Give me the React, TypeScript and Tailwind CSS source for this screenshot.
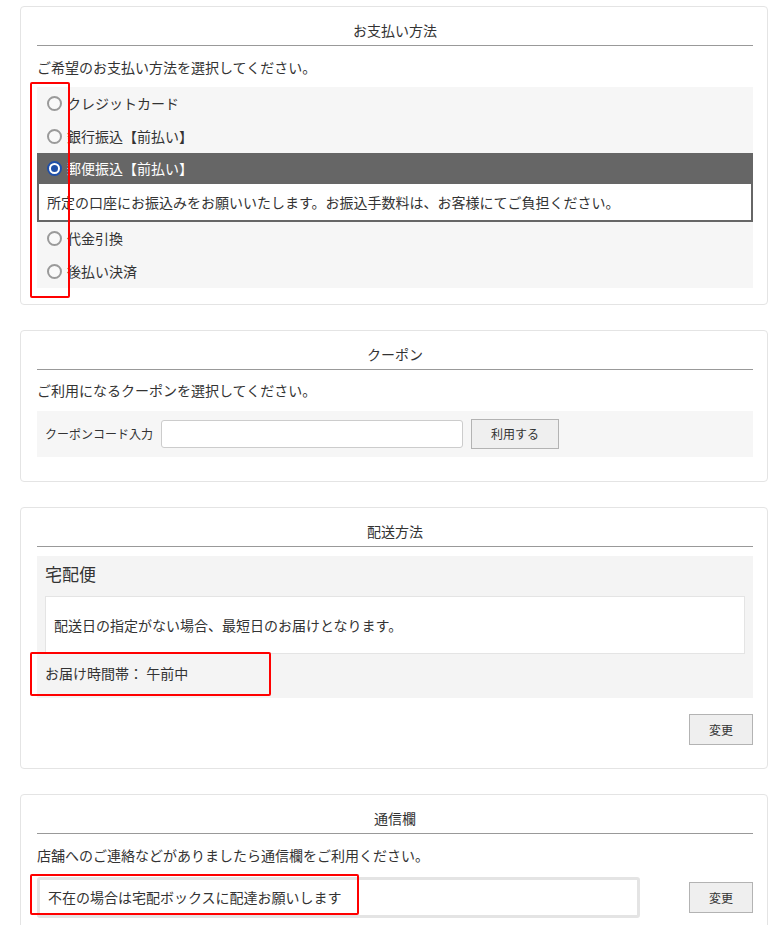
import React from "react";

const font = { fontFamily: '"Noto Sans CJK JP", "Noto Sans", sans-serif' };

function Radio({ checked }: { checked?: boolean }) {
  if (checked) {
    return (
      <span className="flex h-[15px] w-[15px] shrink-0 items-center justify-center rounded-full border-[2px] border-[#1f4fa8] bg-white">
        <span className="h-[7px] w-[7px] rounded-full bg-[#1f4fa8]" />
      </span>
    );
  }
  return <span className="h-[15px] w-[15px] shrink-0 rounded-full border-[2px] border-[#9a9a9a] bg-white/40" />;
}

function Heading({ children }: { children: React.ReactNode }) {
  return (
    <div className="border-b border-[#999] pb-[3px] text-center text-[14px] leading-[24px] text-[#333]">{children}</div>
  );
}

function Btn({ children, className = "" }: { children: React.ReactNode; className?: string }) {
  return (
    <button
      className={`flex items-center justify-center border border-[#b3b3b3] bg-[#efefef] text-[12px] text-[#333] ${className}`}
    >
      {children}
    </button>
  );
}

function RedBox({ className }: { className: string }) {
  return <div className={`pointer-events-none absolute rounded-[2px] border-[2px] border-[#ff0000] ${className}`} />;
}

export default function App() {
  return (
    <div style={font} className="min-h-[925px] bg-white pt-[6px] text-[#333]">
      <div className="ml-[20px] flex w-[748px] flex-col gap-[25px]">
        {/* Payment */}
        <div className="relative rounded-[4px] border border-[#e4e4e4] pb-[16px] pl-[16px] pr-[14px] pt-[11px]">
          <Heading>お支払い方法</Heading>
          <div className="mt-[11px] text-[14px] leading-[20px]">ご希望のお支払い方法を選択してください。</div>
          <div className="mt-[10px] bg-[#f6f6f6] text-[14px]">
            <div className="flex h-[33px] items-center gap-[5px] pl-[10px]">
              <Radio />
              <span>クレジットカード</span>
            </div>
            <div className="flex h-[33px] items-center gap-[5px] pl-[10px]">
              <Radio />
              <span>銀行振込【前払い】</span>
            </div>
            <div className="flex h-[31px] items-center gap-[5px] bg-[#666] pl-[10px] text-white">
              <Radio checked />
              <span>郵便振込【前払い】</span>
            </div>
            <div className="flex h-[38px] items-center border-x-[2px] border-b-[2px] border-[#666] bg-white pl-[8px]">
              所定の口座にお振込みをお願いいたします。お振込手数料は、お客様にてご負担ください。
            </div>
            <div className="flex h-[33px] items-center gap-[5px] pl-[10px]">
              <Radio />
              <span>代金引換</span>
            </div>
            <div className="flex h-[33px] items-center gap-[5px] pl-[10px]">
              <Radio />
              <span>後払い決済</span>
            </div>
          </div>
          <RedBox className="left-[9px] top-[75px] h-[216px] w-[40px]" />
        </div>

        {/* Coupon */}
        <div className="relative rounded-[4px] border border-[#e4e4e4] pb-[24px] pl-[16px] pr-[14px] pt-[11px]">
          <Heading>クーポン</Heading>
          <div className="mt-[10px] text-[14px] leading-[20px]">ご利用になるクーポンを選択してください。</div>
          <div className="mt-[11px] flex h-[46px] items-center bg-[#f6f6f6] pl-[8px]">
            <span className="w-[108px] text-[12px]">クーポンコード入力</span>
            <input className="ml-[8px] h-[28px] w-[302px] rounded-[3px] border border-[#ccc] bg-white outline-none" />
            <Btn className="ml-[8px] h-[30px] w-[88px]">利用する</Btn>
          </div>
        </div>

        {/* Delivery */}
        <div className="relative rounded-[4px] border border-[#e4e4e4] pb-[23px] pl-[16px] pr-[14px] pt-[11px]">
          <Heading>配送方法</Heading>
          <div className="mt-[9px] bg-[#f4f4f4] pb-[14px] pl-[8px] pr-[8px] pt-[3px]">
            <div className="text-[17px] leading-[30px]">宅配便</div>
            <div className="mt-[7px] flex h-[58px] items-center border border-[#e4e4e4] bg-white pl-[8px] text-[14px]">
              配送日の指定がない場合、最短日のお届けとなります。
            </div>
            <div className="mt-[8px] text-[14px] leading-[22px]">お届け時間帯： 午前中</div>
          </div>
          <div className="mt-[16px] flex justify-end">
            <Btn className="h-[31px] w-[64px]">変更</Btn>
          </div>
          <RedBox className="left-[9px] top-[144px] h-[44px] w-[241px]" />
        </div>

        {/* Message */}
        <div className="relative rounded-[4px] border border-[#e4e4e4] pb-[20px] pl-[16px] pr-[14px] pt-[11px]">
          <Heading>通信欄</Heading>
          <div className="mt-[11px] text-[14px] leading-[20px]">店舗へのご連絡などがありましたら通信欄をご利用ください。</div>
          <div className="mt-[12px] flex items-center justify-between">
            <div className="flex h-[41px] w-[603px] items-center rounded-[3px] border-[3px] border-[#e4e4e4] bg-white pl-[8px] text-[14px]">
              不在の場合は宅配ボックスに配達お願いします
            </div>
            <Btn className="h-[31px] w-[64px]">変更</Btn>
          </div>
          <RedBox className="left-[9px] top-[79px] h-[41px] w-[329px]" />
        </div>
      </div>
    </div>
  );
}
